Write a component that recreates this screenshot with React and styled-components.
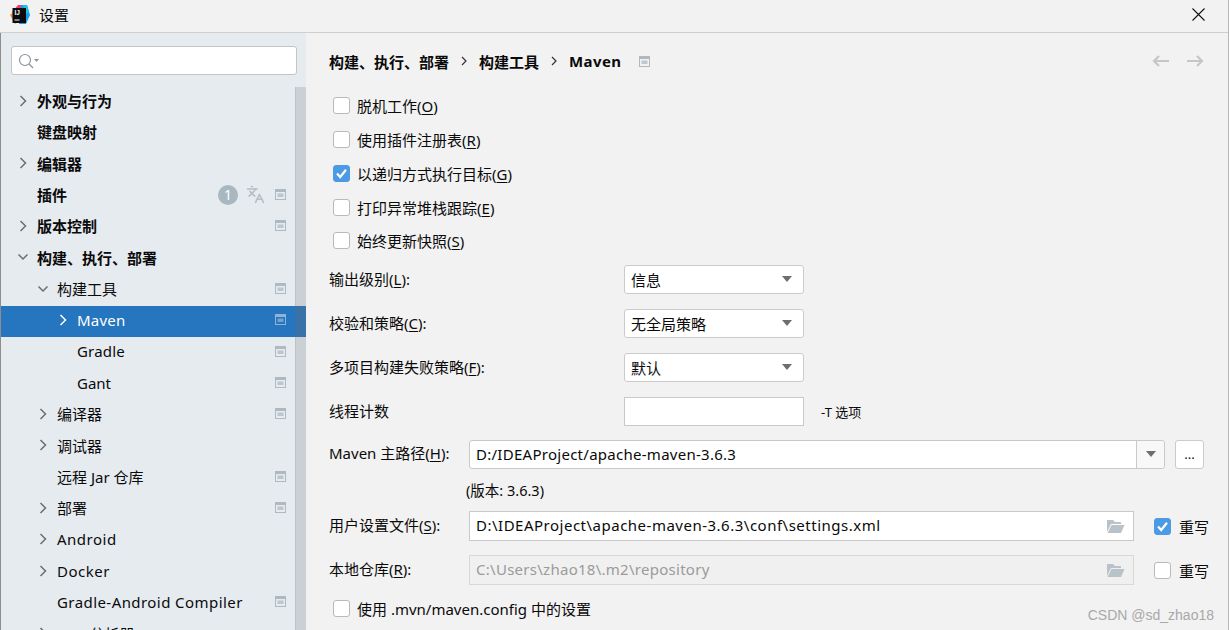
import React from 'react';
import styled, { createGlobalStyle } from 'styled-components';
import { Languages } from 'lucide-react';

const GlobalStyle = createGlobalStyle`
  html, body {
    margin: 0;
    padding: 0;
    background: #f2f2f2;
  }
  * {
    box-sizing: border-box;
  }
`;

const Window = styled.div`
  width: 1229px;
  height: 630px;
  position: relative;
  overflow: hidden;
  display: flex;
  flex-direction: column;
  background: #f2f2f2;
  color: #0a0a0a;
  font-family: 'Noto Sans', 'Noto Sans CJK SC', sans-serif;
  font-size: 15px;
  border-right: 1px solid #b8b8b8;
`;

const TitleBar = styled.div`
  height: 33px;
  flex: none;
  display: flex;
  align-items: center;
  padding: 0 0 3px 10px;
  border-bottom: 1px solid #cfcfcf;
  background: #f2f2f2;
`;

const TitleText = styled.span`
  margin-left: 9px;
  font-size: 15px;
`;

const CloseButton = styled.div`
  margin-left: auto;
  margin-right: 23px;
  display: flex;
`;

const Body = styled.div`
  flex: 1;
  display: flex;
  min-height: 0;
`;

const Sidebar = styled.div`
  width: 306px;
  flex: none;
  position: relative;
  background: #e6ebf0;
  border-left: 1px solid #8e8e8e;
  display: flex;
  flex-direction: column;
  overflow: hidden;
`;

const SearchBox = styled.div`
  height: 29px;
  width: 286px;
  margin: 13px 0 0 10px;
  flex: none;
  display: flex;
  align-items: center;
  padding-left: 6px;
  background: #fff;
  border: 1px solid #c4c4c4;
  border-radius: 3px;
`;

const Tree = styled.div`
  margin-top: 11.5px;
  display: flex;
  flex-direction: column;
`;

const Row = styled.div`
  height: 31.33px;
  flex: none;
  display: flex;
  align-items: center;
  padding-left: ${p => p.$depth * 20 + 16}px;
  padding-right: 20px;
  padding-bottom: 3px;
  background: ${p => (p.$selected ? '#2675bf' : 'transparent')};
  color: ${p => (p.$selected ? '#fff' : '#0a0a0a')};
  font-weight: ${p => (p.$bold ? 700 : 400)};
  position: relative;
  z-index: ${p => (p.$selected ? 2 : 0)};
`;

const ArrowSlot = styled.span`
  width: 20px;
  flex: none;
  display: flex;
  align-items: center;
`;

const RowLabel = styled.span`
  flex: 1;
  white-space: nowrap;
  letter-spacing: ${p => p.$track || 0}px;
`;

const Badge = styled.span`
  width: 20px;
  height: 20px;
  border-radius: 50%;
  background: #a9b7c1;
  color: #fff;
  font-size: 14px;
  font-weight: 400;
  display: flex;
  align-items: center;
  justify-content: center;
  margin-right: 8px;
`;

const TranslateIcon = styled(Languages)`
  width: 19px;
  height: 19px;
  color: #b6bdc3;
  margin-right: 10px;
`;

const Scrollbar = styled.div`
  position: absolute;
  top: 54px;
  right: 0;
  bottom: 0;
  width: 11px;
  background: #cbd0d5;
  border-left: 1px solid #bcc2c8;
  z-index: 1;
`;

const ScrollShade = styled.div`
  position: absolute;
  top: 273px;
  right: 0;
  width: 11px;
  height: 31px;
  background: rgba(80, 110, 140, 0.45);
  z-index: 3;
`;

const Content = styled.div`
  flex: 1;
  min-width: 0;
  padding-left: 23px;
  display: flex;
  flex-direction: column;
  position: relative;
`;

const Breadcrumb = styled.div`
  height: 20px;
  margin-top: 18px;
  display: flex;
  align-items: center;
  font-weight: 700;
  padding-right: 24px;
`;

const CrumbGap = styled.span`
  width: 30px;
  display: flex;
  justify-content: center;
`;

const CrumbLast = styled.span`
  letter-spacing: 0.4px;
`;

const CrumbIcon = styled.span`
  margin-left: 18px;
  display: flex;
`;

const NavArrows = styled.div`
  margin-left: auto;
  display: flex;
  gap: 16px;
`;

const Options = styled.div`
  margin-top: 18px;
  display: flex;
  flex-direction: column;
  padding-left: 4px;
`;

const CheckRow = styled.label`
  height: 33.75px;
  display: flex;
  align-items: center;
  gap: 7px;
`;

const CheckBox = styled.span`
  width: 17px;
  height: 17px;
  flex: none;
  display: flex;
  align-items: center;
  justify-content: center;
  border-radius: 3px;
  background: ${p => (p.$checked ? '#4b9ae4' : '#fff')};
  border: 1px solid ${p => (p.$checked ? '#4b9ae4' : '#b9b9b9')};
`;

const Mnemonic = styled.u`
  text-underline-offset: 2px;
`;

const SelectGrid = styled.div`
  margin-top: 7px;
  display: grid;
  grid-template-columns: 295px 180px auto;
  grid-auto-rows: 29px;
  row-gap: 15px;
  align-items: center;
`;

const GridLabel = styled.span`
  padding-bottom: 2px;
`;

const Select = styled.div`
  height: 29px;
  display: flex;
  align-items: center;
  justify-content: space-between;
  padding: 0 11px 0 6px;
  background: #fff;
  border: 1px solid #cbcbcb;
  border-radius: 3px;
`;

const Caret = styled.span`
  width: 0;
  height: 0;
  border-left: 5.5px solid transparent;
  border-right: 5.5px solid transparent;
  border-top: 6px solid #6e6e6e;
`;

const PlainInput = styled.div`
  height: 29px;
  background: #fff;
  border: 1px solid #c9c9c9;
`;

const Hint = styled.span`
  margin-left: 17px;
  font-size: 13px;
`;

const PathRow = styled.div`
  height: 29px;
  display: flex;
  align-items: center;
`;

const PathLabel = styled.span`
  width: 140px;
  flex: none;
  white-space: nowrap;
  padding-bottom: 3px;
`;

const Combo = styled.div`
  width: 696px;
  height: 29px;
  display: flex;
  background: #fff;
  border: 1px solid #c9c9c9;
  border-radius: 3px;
`;

const ComboText = styled.div`
  flex: 1;
  padding-left: 6px;
  line-height: 26px;
  letter-spacing: 0.27px;
`;

const ComboButton = styled.div`
  width: 28px;
  display: flex;
  align-items: center;
  justify-content: center;
  background: #f8f8f8;
  border-left: 1px solid #c9c9c9;
  border-radius: 0 3px 3px 0;
`;

const BrowseButton = styled.div`
  width: 29px;
  height: 29px;
  margin-left: 10px;
  display: flex;
  align-items: center;
  justify-content: center;
  background: #fff;
  border: 1px solid #cbcbcb;
  border-radius: 3px;
  font-size: 13px;
`;

const VersionText = styled.div`
  height: 43px;
  padding-left: 137px;
  padding-bottom: 2px;
  display: flex;
  align-items: center;
  font-size: 14.5px;
`;

const FileInput = styled.div`
  width: 665px;
  height: 30px;
  display: flex;
  align-items: center;
  justify-content: space-between;
  padding: 0 8px 0 6px;
  background: ${p => (p.$disabled ? '#f0f0f0' : '#fff')};
  color: ${p => (p.$disabled ? '#9b9b9b' : '#0a0a0a')};
  border: 1px solid ${p => (p.$disabled ? '#d8d8d8' : '#c9c9c9')};
`;

const FileText = styled.span`
  padding-bottom: 2px;
  letter-spacing: ${p => p.$track}px;
`;

const OverrideBox = styled.div`
  margin-left: 20px;
  display: flex;
  align-items: center;
  gap: 8px;
`;

const LastCheck = styled(CheckRow)`
  margin: 7px 0 0 4px;
`;

const Spaced = styled.div`
  margin-top: ${p => p.$top}px;
`;

const Watermark = styled.div`
  position: absolute;
  right: 14px;
  bottom: 7px;
  font-family: 'Liberation Sans', sans-serif;
  font-size: 14px;
  color: #a8a8a8;
  z-index: 5;
`;

const Chevron = ({ open, color = '#6e6e6e' }) => (
  <svg width="12" height="12" viewBox="0 0 12 12" fill="none" stroke={color} strokeWidth="1.5">
    {open ? <path d="M1.5 3.5 6 8l4.5-4.5" /> : <path d="M3.5 1 8.5 6l-5 5" />}
  </svg>
);

const ProjectIcon = ({ color = '#aeb9c1' }) => (
  <svg width="11" height="11" viewBox="0 0 11 11" style={{ flex: 'none' }}>
    <rect x="0.5" y="0.5" width="10" height="10" fill="none" stroke={color} />
    <rect x="1" y="1" width="9" height="2" fill={color} />
    <rect x="2.5" y="4.5" width="6" height="3.5" fill={color} opacity="0.75" />
  </svg>
);

const FolderIcon = ({ color }) => (
  <svg width="19" height="15" viewBox="0 0 19 15">
    <path d="M1 1h6l2 2h6v2H5L1 13z" fill={color} />
    <path d="M5.5 6H18.5L15 14H1.500z" fill={color} />
  </svg>
);

const CheckMark = () => (
  <svg width="13" height="13" viewBox="0 0 13 13" fill="none" stroke="#fff" strokeWidth="2.2">
    <path d="M2 6.500 5.200 10 11 2.800" />
  </svg>
);

const Logo = () => (
  <svg width="20" height="20" viewBox="0 0 20 20">
    <path d="M2 7 8 0h5l-3 12z" fill="#fc3a72" />
    <path d="M0 10l5-5 6 9-6 5z" fill="#ff8a2a" />
    <path d="M11 0h6l3 10-4 9H9z" fill="#1e9bf0" />
    <path d="M13 0h4l2 7-3 2z" fill="#16c7d8" />
    <rect x="2.500" y="3" width="13.500" height="15" fill="#0b0b10" />
    <text x="4.500" y="10" fontSize="6.500" fontWeight="700" fill="#fff" fontFamily="Liberation Sans">IJ</text>
    <rect x="4.500" y="14.500" width="5" height="1" fill="#fff" />
  </svg>
);

const treeRows = [
  { label: '外观与行为', depth: 0, bold: true, arrow: 'closed' },
  { label: '键盘映射', depth: 0, bold: true },
  { label: '编辑器', depth: 0, bold: true, arrow: 'closed' },
  { label: '插件', depth: 0, bold: true, plugin: true, icon: true },
  { label: '版本控制', depth: 0, bold: true, arrow: 'closed', icon: true },
  { label: '构建、执行、部署', depth: 0, bold: true, arrow: 'open' },
  { label: '构建工具', depth: 1, arrow: 'open', icon: true },
  { label: 'Maven', depth: 2, arrow: 'closed', icon: true, selected: true, track: 0.2 },
  { label: 'Gradle', depth: 2, icon: true, track: 0.2 },
  { label: 'Gant', depth: 2, icon: true },
  { label: '编译器', depth: 1, arrow: 'closed', icon: true },
  { label: '调试器', depth: 1, arrow: 'closed' },
  { label: '远程 Jar 仓库', depth: 1, icon: true },
  { label: '部署', depth: 1, arrow: 'closed', icon: true },
  { label: 'Android', depth: 1, arrow: 'closed', track: 0.5 },
  { label: 'Docker', depth: 1, arrow: 'closed', track: 0.5 },
  { label: 'Gradle-Android Compiler', depth: 1, icon: true, track: 0.43 },
  { label: 'Java 分析器', depth: 1, arrow: 'closed' },
];

const options = [
  { text: '脱机工作', key: 'O' },
  { text: '使用插件注册表', key: 'R' },
  { text: '以递归方式执行目标', key: 'G', checked: true },
  { text: '打印异常堆栈跟踪', key: 'E' },
  { text: '始终更新快照', key: 'S' },
];

const selects = [
  { text: '输出级别', key: 'L', value: '信息' },
  { text: '校验和策略', key: 'C', value: '无全局策略' },
  { text: '多项目构建失败策略', key: 'F', value: '默认' },
];

const App = () => {
  return (
    <Window>
      <GlobalStyle />
      <TitleBar>
        <Logo />
        <TitleText>设置</TitleText>
        <CloseButton>
          <svg width="13" height="13" viewBox="0 0 13 13" stroke="#111" strokeWidth="1.1">
            <path d="M.5.5l12 12M12.500.5l-12 12" />
          </svg>
        </CloseButton>
      </TitleBar>
      <Body>
        <Sidebar>
          <SearchBox>
            <svg width="21" height="16" viewBox="0 0 21 16" fill="none" stroke="#8f979d" strokeWidth="1.2">
              <circle cx="7" cy="7" r="5.500" />
              <path d="M11 11l4 4" />
              <path d="M16 6h5l-2.500 3z" fill="#8f979d" stroke="none" />
            </svg>
          </SearchBox>
          <Tree>
            {treeRows.map(row => (
              <Row key={row.label} $depth={row.depth} $bold={row.bold} $selected={row.selected}>
                <ArrowSlot>
                  {row.arrow && (
                    <Chevron open={row.arrow === 'open'} color={row.selected ? '#fff' : '#6e6e6e'} />
                  )}
                </ArrowSlot>
                <RowLabel $track={row.track}>{row.label}</RowLabel>
                {row.plugin && <Badge>1</Badge>}
                {row.plugin && <TranslateIcon />}
                {row.icon && <ProjectIcon color={row.selected ? '#8fb3d6' : '#aeb9c1'} />}
              </Row>
            ))}
          </Tree>
          <Scrollbar />
          <ScrollShade />
        </Sidebar>
        <Content>
          <Breadcrumb>
            <span>构建、执行、部署</span>
            <CrumbGap>
              <svg width="8" height="10" viewBox="0 0 8 10" fill="none" stroke="#333" strokeWidth="1.2">
                <path d="M2 1l4 4-4 4" />
              </svg>
            </CrumbGap>
            <span>构建工具</span>
            <CrumbGap>
              <svg width="8" height="10" viewBox="0 0 8 10" fill="none" stroke="#333" strokeWidth="1.2">
                <path d="M2 1l4 4-4 4" />
              </svg>
            </CrumbGap>
            <CrumbLast>Maven</CrumbLast>
            <CrumbIcon>
              <ProjectIcon />
            </CrumbIcon>
            <NavArrows>
              <svg width="18" height="12" viewBox="0 0 18 12" fill="none" stroke="#c6c6c6" strokeWidth="2.2">
                <path d="M17 6H2M7 1 2 6l5 5" />
              </svg>
              <svg width="18" height="12" viewBox="0 0 18 12" fill="none" stroke="#c6c6c6" strokeWidth="2.2">
                <path d="M1 6h15M11 1l5 5-5 5" />
              </svg>
            </NavArrows>
          </Breadcrumb>
          <Options>
            {options.map(opt => (
              <CheckRow key={opt.key}>
                <CheckBox $checked={opt.checked}>{opt.checked && <CheckMark />}</CheckBox>
                <span>
                  {opt.text}(<Mnemonic>{opt.key}</Mnemonic>)
                </span>
              </CheckRow>
            ))}
          </Options>
          <SelectGrid>
            {selects.map(sel => (
              <React.Fragment key={sel.key}>
                <GridLabel>
                  {sel.text}(<Mnemonic>{sel.key}</Mnemonic>):
                </GridLabel>
                <Select>
                  <span>{sel.value}</span>
                  <Caret />
                </Select>
                <span />
              </React.Fragment>
            ))}
            <GridLabel>线程计数</GridLabel>
            <PlainInput />
            <Hint>-T 选项</Hint>
          </SelectGrid>
          <Spaced $top={14}>
            <PathRow>
              <PathLabel>
                Maven 主路径(<Mnemonic>H</Mnemonic>):
              </PathLabel>
              <Combo>
                <ComboText>D:/IDEAProject/apache-maven-3.6.3</ComboText>
                <ComboButton>
                  <Caret />
                </ComboButton>
              </Combo>
              <BrowseButton>...</BrowseButton>
            </PathRow>
          </Spaced>
          <VersionText>(版本: 3.6.3)</VersionText>
          <PathRow>
            <PathLabel>
              用户设置文件(<Mnemonic>S</Mnemonic>):
            </PathLabel>
            <FileInput>
              <FileText $track={0.5}>D:\IDEAProject\apache-maven-3.6.3\conf\settings.xml</FileText>
              <FolderIcon color="#b9c2c8" />
            </FileInput>
            <OverrideBox>
              <CheckBox $checked>
                <CheckMark />
              </CheckBox>
              <span>重写</span>
            </OverrideBox>
          </PathRow>
          <Spaced $top={15}>
            <PathRow>
              <PathLabel>
                本地仓库(<Mnemonic>R</Mnemonic>):
              </PathLabel>
              <FileInput $disabled>
                <FileText $track={0.27}>C:\Users\zhao18\.m2\repository</FileText>
                <FolderIcon color="#b9c2c8" />
              </FileInput>
              <OverrideBox>
                <CheckBox />
                <span>重写</span>
              </OverrideBox>
            </PathRow>
          </Spaced>
          <LastCheck>
            <CheckBox />
            <span>使用 .mvn/maven.config 中的设置</span>
          </LastCheck>
        </Content>
      </Body>
      <Watermark>CSDN @sd_zhao18</Watermark>
    </Window>
  );
};

export default App;
